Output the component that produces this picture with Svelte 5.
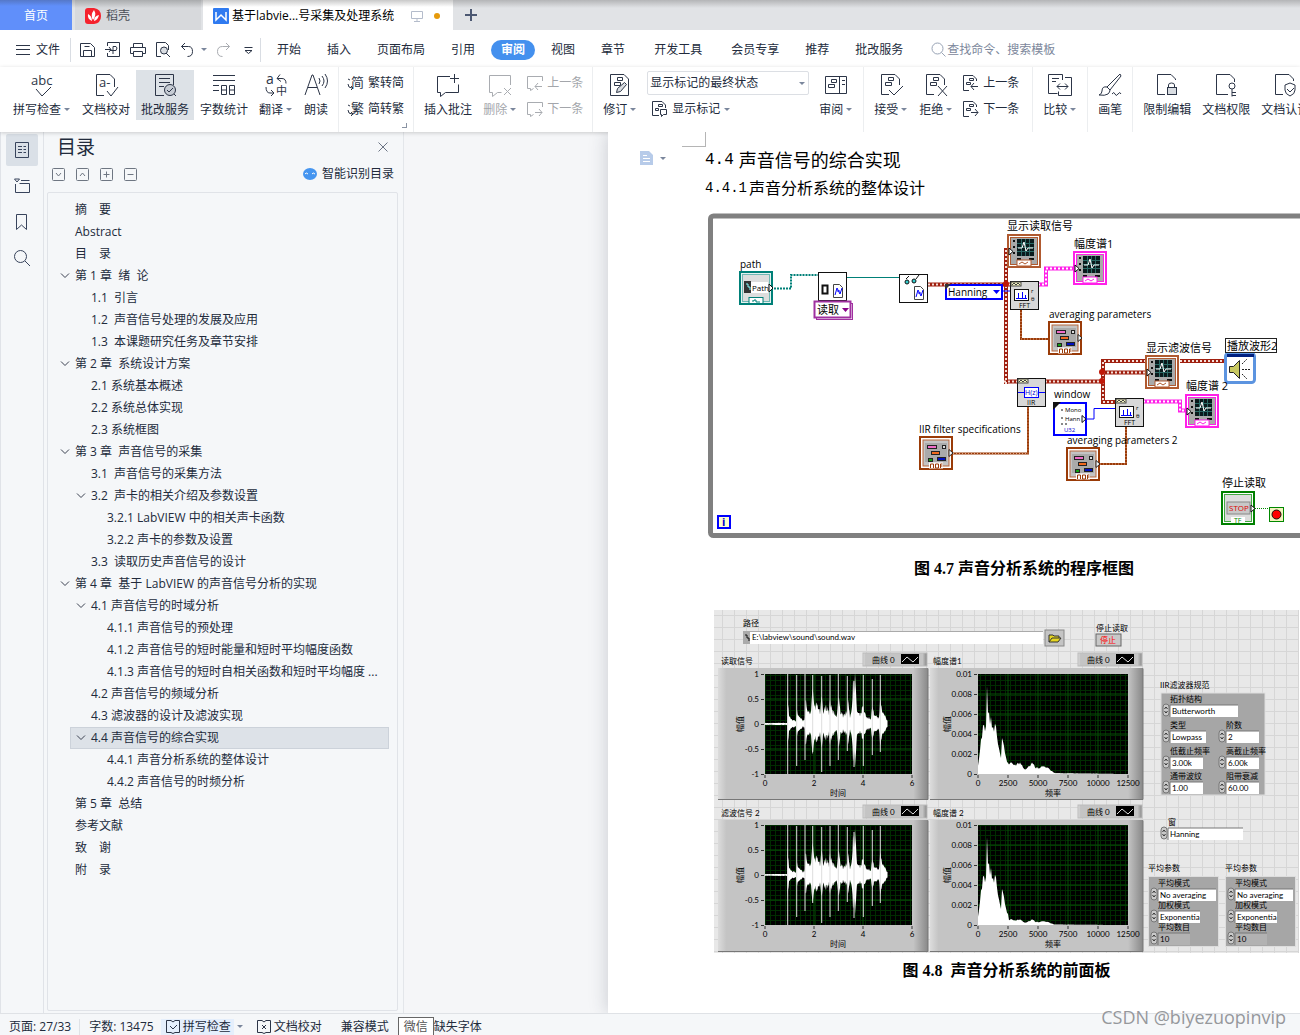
<script>
  const menus = ['开始', '插入', '页面布局', '引用', '审阅', '视图', '章节', '开发工具', '会员专享', '推荐', '批改服务'];

  const outline = [
    { level: 0, text: '摘　要' },
    { level: 0, text: 'Abstract' },
    { level: 0, text: '目　录' },
    { level: 0, text: '第 1 章  绪  论', open: true },
    { level: 1, text: '1.1  引言' },
    { level: 1, text: '1.2  声音信号处理的发展及应用' },
    { level: 1, text: '1.3  本课题研究任务及章节安排' },
    { level: 0, text: '第 2 章  系统设计方案', open: true },
    { level: 1, text: '2.1 系统基本概述' },
    { level: 1, text: '2.2 系统总体实现' },
    { level: 1, text: '2.3 系统框图' },
    { level: 0, text: '第 3 章  声音信号的采集', open: true },
    { level: 1, text: '3.1  声音信号的采集方法' },
    { level: 1, text: '3.2  声卡的相关介绍及参数设置', open: true },
    { level: 2, text: '3.2.1 LabVIEW 中的相关声卡函数' },
    { level: 2, text: '3.2.2 声卡的参数及设置' },
    { level: 1, text: '3.3  读取历史声音信号的设计' },
    { level: 0, text: '第 4 章  基于 LabVIEW 的声音信号分析的实现', open: true },
    { level: 1, text: '4.1 声音信号的时域分析', open: true },
    { level: 2, text: '4.1.1 声音信号的预处理' },
    { level: 2, text: '4.1.2 声音信号的短时能量和短时平均幅度函数' },
    { level: 2, text: '4.1.3 声音信号的短时自相关函数和短时平均幅度 ...' },
    { level: 1, text: '4.2 声音信号的频域分析' },
    { level: 1, text: '4.3 滤波器的设计及滤波实现' },
    { level: 1, text: '4.4 声音信号的综合实现', open: true },
    { level: 2, text: '4.4.1 声音分析系统的整体设计' },
    { level: 2, text: '4.4.2 声音信号的时频分析' },
    { level: 0, text: '第 5 章  总结' },
    { level: 0, text: '参考文献' },
    { level: 0, text: '致　谢' },
    { level: 0, text: '附　录' }
  ];

  let activeMenu = $state('审阅');
  let selected = $state(24);
  let markup = $state('显示标记的最终状态');

  const page = 'M10 21.5H2.5V1.5H16l4.5 4.5v6';
  const marks = 'M9.5 4.5h5v3h-5zM6.5 9.5h6v3h-6z';
  const bubble = 'M22.5 12V2.5H1.5v17h3v4l5-4h4';
  const icons = {
    spell: 'M6 16l6 7 9-9',
    proof: 'M10 22.5H2.5V1.5H16l4.5 4.5v8M13 18l4 5 7-9',
    count: 'M1 2.5h22M1 7.5h22M1 12.5h6M1 17.5h6M9.5 12.5h5v9h-5zM17.5 12.5h5v9h-5zM9.5 17h5M17.5 17h5',
    translate: 'M13 5.5l3-4M13 5.5l4 3M13 5.5h5q4 0 4 5M2 14q0 6 4 6h3M7 17l3 3-3 3',
    read: 'M1 22L8 2h1l7 20M4 14.5h9M15 5q2 3 0 6M18 3q4 5 0 10M21 1q5 7 0 14',
    comment: 'M14 3.5H1.5v16h3v4l5-4h13v-8M18.5 1v9M14 5.5h9',
    remove: bubble + 'M16 15l7 7m0-7l-7 7',
    panes: 'M1.5 3.5h21v17h-21zM15.5 3.5v17M18 7.5h3M18 11.5h3M7.5 6.5h5v3h-5zM4.5 11.5h6v3h-6z',
    accept: page + marks + 'M10 17l5 5 9-9',
    reject: page + marks + 'M14 13l9 10m0-10l-9 10',
    compare: 'M14.5 7V1.5H.5v19h9M4 5.5h7M4 8.5h4M17 4.5h6.5v18h-13v-4M9 13.5h11M12 10.5l-3 3 3 3M17 10.5l3 3-3 3'
  };
  const minis = {
    prevComment: 'M15.5 6V1.5H.5v12h3v2l3-2M15 11.5H8M11 8l-3 3.5 3 3.5',
    nextComment: 'M15.5 6V1.5H.5v12h3v2l3-2M8 11.5h7M12 8l3 3.5-3 3.5',
    prev: 'M6 15.5H.5V.5H10l3.5 3.5v2M6.5 3.5h4v2h-4zM3.5 7.5h4v2h-4zM15 11.5H8M11 8l-3 3.5 3 3.5',
    next: 'M6 15.5H.5V.5H10l3.5 3.5v2M6.5 3.5h4v2h-4zM3.5 7.5h4v2h-4zM8 11.5h7M12 8l3 3.5-3 3.5',
    show: 'M7 14.5H.5V.5H10l3.5 3.5v3M6.5 3.5h4v2h-4zM3.5 7.5h3v2h-3zM8.5 8.5h6v5h-3l-2 2v-2h-1z'
  };

  const noise = (i) => Math.abs(Math.sin(i * 12.9898) * 43758.5453) % 1;
  const spikes = [22.7, 31.7, 40, 47.7, 56.7, 65, 73.3, 82.3, 89, 98.3, 107.3, 115.3];
  const heights = [50, 49, 50, 49, 48, 49, 50, 48, 43, 49, 45, 49];

  const envelope = [[0, 1], [22, 1], [22.5, 28], [24, 10], [27, 4], [31, 3], [32, 18], [33, 8], [38, 3], [40, 6], [40.5, 24], [42, 12], [46, 12], [47.5, 32], [49, 17], [52, 18], [55, 11], [57, 26], [58, 12], [62, 17], [64, 11], [65, 24], [67, 13], [72, 8], [73.5, 34], [75, 14], [78, 8], [82, 12], [83, 22], [85, 8], [87, 18], [88, 38], [90.5, 42], [91.5, 18], [95, 8], [98, 18], [99, 14], [101, 7], [106, 5], [107.5, 20], [109, 9], [114, 6], [115.5, 26], [117, 12], [120, 8], [123, 2], [150, 0]];
  const profile = [[0, 10], [2, 30], [4, 52], [6, 62], [8, 68], [9, 98], [11, 88], [12, 64], [15, 56], [18, 58], [19, 44], [21, 28], [23, 20], [24, 38], [26, 34], [27, 22], [30, 14], [34, 12], [43, 13], [47, 6], [54, 13], [58, 8], [66, 9], [71, 6], [77, 1], [151, 0]];

  function level(points, x) {
    const k = points.findIndex((p) => p[0] > x);
    const [xa, ya] = points[k - 1];
    const [xb, yb] = points[k];
    return ya + ((yb - ya) * (x - xa)) / (xb - xa);
  }

  // the recording is drawn mirrored around the zero line
  function wave(x0, y0, scale) {
    let up = '';
    let down = '';
    for (let i = 0; i <= 245; i++) {
      const x = i / 2;
      const a = level(envelope, x) * (0.75 + noise(i) * 0.5) * scale;
      up += `L${x0 + x} ${(y0 - a).toFixed(1)}`;
      down = `L${x0 + x} ${(y0 + a * 0.85).toFixed(1)}` + down;
    }
    return 'M' + up.slice(1) + down + 'Z';
  }

  function spectrum(x0, y0, tail) {
    let d = `M${x0} ${y0}`;
    for (let i = 0; i < 150; i++) {
      const h = level(profile, i) * (i > 30 ? tail : 1) * (0.65 + noise(i + 3) * 0.3);
      d += `L${x0 + i} ${(y0 - h).toFixed(1)}`;
    }
    return d + `V${y0}Z`;
  }

  const fields = [
    ['拓扑结构', 'Butterworth', 1169, 700, 68],
    ['类型', 'Lowpass', 1169, 726, 36],
    ['阶数', '2', 1225, 726, 33],
    ['低截止频率', '3.00k', 1169, 752, 33],
    ['高截止频率', '6.00k', 1225, 752, 33],
    ['通带波纹', '1.00', 1169, 777, 33],
    ['阻带衰减', '60.00', 1225, 777, 33]
  ];
</script>

{#snippet big(label, icon, caret = false, extra = '')}
  <button class="big {extra}" class:drop={caret}>
    <svg class="icon" viewBox="0 0 24 24" width="24" height="24">
      {#if icons[icon]}<path d={icons[icon]} />{/if}
      {#if icon === 'spell'}<text x="1" y="12" font-size="13">abc</text>{/if}
      {#if icon === 'proof'}<text x="5" y="14" font-size="13">a-</text>{/if}
      {#if icon === 'translate'}
        <text x="2" y="11" font-size="14">a</text><text x="12" y="22" font-size="11">中</text>
      {/if}
      {#if icon === 'review'}
        <path d="M11 22.5H2.5V1.5h18V12M6 5.5h11M6 9.5h11M6 13.5h5" />
        <circle cx="17" cy="17" r="5.5" fill="#c6ccd4" />
        <path d="M14 17l2 2 4-4M21 21l2 2" />
      {/if}
      {#if icon === 'revise'}
        <path d="M2.5 1.5H16l4.5 4.5v16.5h-18z" /><path d={marks} />
        <path d="M8.5 19.5l1-4 7-6 2 2-6 7z" fill="#d9dde2" />
      {/if}
      {#if icon === 'brush'}
        <path d="M22 1L9 14l3 3L23 3z" /><path d="M9 14q-5-1-5 4 0 3-3 4 6 1 9-1 2-2 2-4M14 21q2-3 3 0t3 0 3 0" />
      {/if}
      {#if icon === 'lock'}
        <path d="M10 21.5H2.5V1.5H16l4.5 4.5v1" /><path d="M13.5 15v-3q0-2 3-2t3 2v3" />
        <rect x="12.5" y="14.5" width="9" height="7" fill="#d9dde2" />
      {/if}
      {#if icon === 'key'}
        <path d="M14 21.5H2.5V1.5H16l4.5 4.5v3" /><circle cx="18" cy="13" r="3" /><path d="M18 16v7.5M18 19.5h4M18 22.5h4" />
      {/if}
      {#if icon === 'shield'}
        <path d="M10 21.5H2.5V1.5H16l4.5 4.5v2" /><path d="M17 10l5 2v5q0 4-5 6-5-2-5-6v-5zM14 16l3 3 4-4" />
      {/if}
    </svg>
    <span>{label}{#if caret}<i class="caret"></i>{/if}</span>
  </button>
{/snippet}

{#snippet mini(label, icon, extra = '', caret = false)}
  <button class="mini {extra}">
    <svg class="icon" viewBox="0 0 16 16" width="16" height="16">
      {#if minis[icon]}
        <path d={minis[icon]} />
      {:else}
        <path d="M0 9q0 4 4 4M3 11l2 2-2 2M0 4l2 1" />
        <text x="3" y="12" font-size="13">{icon}</text>
      {/if}
    </svg>
    {label}{#if caret}<i class="caret"></i>{/if}
  </button>
{/snippet}

{#snippet graphNode(x, y, color)}
  <g transform="translate({x} {y})">
    <rect x="1" y="1" width="32" height="32" fill="#fff" stroke={color} stroke-width="2" />
    <rect x="3.5" y="3.5" width="27" height="27" fill="#aaa" stroke={color} />
    <rect x="10" y="5" width="17" height="17" fill="#0a1a1c" />
    <path d="M10 9.5h17M10 13.5h17M10 17.5h17M14.5 5v17M18.5 5v17M22.5 5v17" stroke="#2c6a66" />
    <path d="M11 14h4l2-6 2 9 2-3h5" stroke="#fff" fill="none" />
    <path d="M6 7h2M6 13h2M6 19h2M10 25h4M22 25h5" stroke="#111" stroke-width="2" />
    <rect x="10" y="26" width="14" height="6" fill="#fff" stroke={color} />
    <path d="M12 30l3-2 3 2 3-2" stroke={color} fill="none" />
    <path d="M2 14v7l4-3.5z" fill="#fff" stroke="#111" />
  </g>
{/snippet}

{#snippet clusterNode(x, y)}
  <g transform="translate({x} {y})">
    <rect x="1" y="1" width="32" height="32" fill="#fff" stroke="#9a3b08" stroke-width="2" />
    <rect x="4" y="4" width="26" height="26" fill="#c4c4c4" stroke="#b8663c" />
    <rect x="6" y="7" width="22" height="19" fill="#aaa" />
    <g stroke="#222">
      <rect x="8.5" y="9.5" width="9" height="3" fill="#f06cc8" />
      <rect x="23.5" y="9.5" width="3" height="3" fill="#ddd" />
      <rect x="12.5" y="15.5" width="8" height="3" fill="#f06a20" />
      <rect x="9.5" y="22.5" width="4" height="3" fill="#10a010" />
      <rect x="18.5" y="21.5" width="8" height="3" fill="#0010c0" />
      <path d="M30 13.5v7l4-3.5z" fill="#fff" />
    </g>
    <rect x="10" y="26.5" width="14" height="6" fill="#fff" />
    <path d="M11.5 32v-4h3v4M16.5 32v-4h3v4h-3M21.5 32v-4h2M21.5 30h2" stroke="#9a3b08" fill="none" />
  </g>
{/snippet}

{#snippet fftNode(x, y, label)}
  <g transform="translate({x} {y})">
    <rect x=".5" y=".5" width="28" height="28" fill="#d8d8d8" stroke="#111" />
    <rect x="1" y="1" width="10" height="4" fill="#f2f2c0" stroke="#444" />
    <path d="M2 4l2-2 2 2 2-2 2 2" stroke="#444" fill="none" />
    {#if label === 'FFT'}
      <rect x="4.5" y="8.5" width="14" height="11" fill="#fff" stroke="#111" />
      <path d="M6 17.5h11M8.5 17v-5M12.5 17v-6M15.5 17v-3" stroke="#00f" />
      <text x="21" y="12" font-size="6">r</text><text x="21" y="20" font-size="6">θ</text>
    {:else}
      <path d="M1 14.5h27" stroke="#00f" />
      <rect x="7.5" y="9.5" width="14" height="10" fill="#fff" stroke="#00f" />
      <text x="8" y="17" font-size="7" fill="#00c">H(z)</text>
    {/if}
    <text x={label === 'FFT' ? 9 : 10} y="27" font-size="7">{label}</text>
  </g>
{/snippet}

{#snippet spinner(x, y)}
  <rect {x} {y} width="6" height="12" rx="3" fill="#c9c9c9" stroke="#777" />
  <path d="M{x + 1.5} {y + 5}l1.5-2 1.5 2M{x + 1.5} {y + 7}l1.5 2 1.5-2" stroke="#333" fill="none" />
{/snippet}

{#snippet field(label, value, x, y, w, off = false)}
  {@render spinner(x - 6, y + 4)}
  <text x={x + 1} y={y + 2}>{label}</text>
  <rect x={x + 1} y={y + 5} width={w} height="12" fill={off ? '#b2b2b2' : '#fff'} />
  <path d="M{x + 1} {y + 17}v-12h{w}" stroke="#777" fill="none" />
  <text x={x + 3} y={y + 14}>{value}</text>
{/snippet}

{#snippet plot(x, y, w, title, kind, top)}
  <rect {x} {y} width={w} height="132" fill="url(#metal)" />
  <path d="M{x} {y + 131.5}h{w}v-131" stroke="#777" fill="none" />
  <text x={x + 3} y={y - 4}>{title}</text>
  <rect x={x + w - 65} y={y - 15} width="64" height="13" fill="url(#metal)" stroke="#bbb" />
  <text x={x + w - 56} y={y - 5}>曲线 0</text>
  <rect x={x + w - 27} y={y - 14} width="18" height="10" fill="#000" />
  <path d="M{x + w - 26} {y - 6}l5-5 6 5 5-5" stroke="#ddd" fill="none" />
  {#if kind === 'time'}
    <rect x={x + 47} y={top} width="147" height="100" fill="#000" />
    <rect x={x + 47} y={top} width="147" height="100" fill="url(#grid)" />
    <path d="M{x + 47} {top + 25}h147M{x + 47} {top + 75}h147M{x + 96} {top}v100M{x + 145} {top}v100" stroke="#064f06" />
    <path d={wave(x + 47, top + 50, top > 800 ? 0.9 : 1)} fill="#fff" />
    {#each spikes as s, i}
      <path d="M{x + 47 + s} {top + 50 - heights[i]}v{heights[i] * 2 - (i % 4) * 7}" stroke="#ddd" />
    {/each}
    {#each ['1', '0.5', '0', '-0.5', '-1'] as t, i}
      <text x={x + 41} y={top + 3 + i * 25} text-anchor="end">{t}</text>
      <path d="M{x + 43} {top + 0.5 + i * 25}h3" stroke="#333" />
    {/each}
    {#each ['0', '2', '4', '6'] as t, i}
      <text x={x + 47 + i * 49} y={top + 112} text-anchor="middle">{t}</text>
      <path d="M{x + 47 + i * 49} {top + 101}v3" stroke="#333" />
    {/each}
    <text x={x + 112} y={top + 122}>时间</text>
    <text transform="translate({x + 25} {top + 58}) rotate(-90)">幅值</text>
  {:else}
    <rect x={x + 48} y={top} width="150" height="100" fill="#000" />
    <rect x={x + 48} y={top} width="150" height="100" fill="url(#grid)" />
    <path d="M{x + 48} {top + 20}h150m-150 20h150m-150 20h150m-150 20h150M{x + 78} {top}v100m30-100v100m30-100v100m30-100v100" stroke="#064f06" fill="none" />
    <path d={spectrum(x + 48, top + 100, top > 800 ? 0.5 : 1)} fill="#fff" />
    {#each ['0.01', '0.008', '0.006', '0.004', '0.002', '0'] as t, i}
      <text x={x + 42} y={top + 3 + i * 20} text-anchor="end">{t}</text>
      <path d="M{x + 44} {top + 0.5 + i * 20}h3" stroke="#333" />
    {/each}
    {#each ['0', '2500', '5000', '7500', '10000', '12500'] as t, i}
      <text x={x + 48 + i * 30} y={top + 112} text-anchor="middle">{t}</text>
      <path d="M{x + 48 + i * 30} {top + 101}v3" stroke="#333" />
    {/each}
    <text x={x + 115} y={top + 122}>频率</text>
    <text transform="translate({x + 20} {top + 58}) rotate(-90)">幅值</text>
  {/if}
{/snippet}

<div class="app">
  <header>
    <nav class="tabs">
      <button class="tab home">首页</button>
      <button class="tab docer">
        <svg viewBox="0 0 16 16" width="16" height="16">
          <path d="M0 3Q0 0 3 0h6q7 1 7 8t-7 8H3q-3 0-3-3z" fill="#f5222d" />
          <path d="M8 12Q5 7 9 2q3 5-1 10zM7 13Q2 11 3 6q4 2 4 7zM9 13q0-5 5-6-1 5-5 6z" fill="#fff" />
        </svg>
        稻壳
      </button>
      <button class="tab doc">
        <svg viewBox="0 0 16 16" width="16" height="16">
          <rect width="16" height="16" rx="1" fill="#2f7af0" />
          <path d="M3 4v8l5-5 5 5V4" stroke="#fff" stroke-width="1.5" fill="none" />
        </svg>
        <span>基于labvie...号采集及处理系统</span>
        <svg viewBox="0 0 12 12" width="12" height="12"><path d="M.5 1.5h11v7H.5zM6 9v2M3 11.5h6" stroke="#b4bccb" fill="none" /></svg>
        <i class="dot"></i>
      </button>
      <button class="add" aria-label="新建">
        <svg viewBox="0 0 12 12" width="12" height="12"><path d="M6 0v12M0 6h12" stroke="#4c5872" stroke-width="2" /></svg>
      </button>
    </nav>

    <div class="menubar">
      <button class="file">
        <svg class="icon" viewBox="0 0 14 12" width="14" height="12"><path d="M0 1.5h14M0 5.5h14M0 10.5h14" /></svg>
        文件
      </button>
      <div class="quick">
        <button aria-label="保存"><svg class="icon" viewBox="0 0 16 16" width="16" height="16"><path d="M.5 14.5V1.5h10l4 4v9zM3.5 14V8.5h8V14M4.5 4.5h5" /></svg></button>
        <button aria-label="输出为PDF"><svg class="icon" viewBox="0 0 16 16" width="16" height="16"><path d="M2.5 4V.5h12v14h-12V11M0 7.5h6M4 5l2 2.5L4 10M8 12V4.5h3q2 1 0 4H5" /></svg></button>
        <button aria-label="打印"><svg class="icon" viewBox="0 0 16 16" width="16" height="16"><path d="M3.5 5V1.5h9V5M3.5 11.5h-3v-6h15v6h-3M3.5 9.5h9v5h-9z" /></svg></button>
        <button aria-label="打印预览"><svg class="icon" viewBox="0 0 16 16" width="16" height="16"><path d="M6 14.5H1.5V.5h9l3 3V8" /><circle cx="9" cy="8.5" r="3.5" fill="#d9dde2" /><path d="M11 11l4 4" /></svg></button>
        <button class="undo" aria-label="撤销"><svg class="icon" viewBox="0 0 16 16" width="16" height="16"><path d="M5 1L1.5 4.5 5 8M1.5 4.5h7q4 0 4 5t-5 5" /></svg><i class="caret"></i></button>
        <button class="off" aria-label="恢复"><svg class="icon" viewBox="0 0 16 16" width="16" height="16"><path d="M10 1l3.5 3.5L10 8M13.5 4.5h-7q-5 0-5 5t5 5" /></svg></button>
        <button aria-label="自定义"><svg class="icon" viewBox="0 0 16 16" width="16" height="16"><path d="M3.5 5.5h8M4 8.5l3.5 3 3.5-3z" /></svg></button>
      </div>
      {#each menus as menu}
        <button
          class="menu"
          class:wide={menu === '开发工具'}
          class:active={menu === activeMenu}
          onclick={() => (activeMenu = menu)}
        >{menu}</button>
      {/each}
      <label class="search">
        <svg viewBox="0 0 15 15" width="15" height="15"><circle cx="6.5" cy="6.5" r="5.5" /><path d="M10.5 10.5l4 4" /></svg>
        <input type="text" placeholder="查找命令、搜索模板" aria-label="查找命令" />
      </label>
    </div>

    <div class="ribbon">
      <div class="group first">
        {@render big('拼写检查', 'spell', true)}
        {@render big('文档校对', 'proof')}
        {@render big('批改服务', 'review', false, 'on')}
        {@render big('字数统计', 'count')}
        {@render big('翻译', 'translate', true)}
        {@render big('朗读', 'read')}
      </div>
      <div class="group">
        <div class="stack">
          {@render mini('繁转简', '简')}
          {@render mini('简转繁', '繁')}
        </div>
        <i class="launcher"></i>
      </div>
      <div class="group">
        {@render big('插入批注', 'comment')}
        {@render big('删除', 'remove', true, 'off')}
        <div class="stack">
          {@render mini('上一条', 'prevComment', 'off')}
          {@render mini('下一条', 'nextComment', 'off')}
        </div>
      </div>
      <div class="group">
        {@render big('修订', 'revise', true)}
        <div class="stack">
          <div class="combo">
            <select bind:value={markup} aria-label="显示标记状态">
              <option>显示标记的最终状态</option>
              <option>原始状态</option>
            </select>
            <i class="caret"></i>
          </div>
          {@render mini('显示标记', 'show', 'indent', true)}
        </div>
        {@render big('审阅', 'panes', true)}
      </div>
      <div class="group">
        {@render big('接受', 'accept', true)}
        {@render big('拒绝', 'reject', true)}
        <div class="stack roomy">
          {@render mini('上一条', 'prev')}
          {@render mini('下一条', 'next')}
        </div>
      </div>
      <div class="group">{@render big('比较', 'compare', true)}</div>
      <div class="group">{@render big('画笔', 'brush')}</div>
      <div class="group">
        {@render big('限制编辑', 'lock')}
        {@render big('文档权限', 'key')}
        {@render big('文档认证', 'shield')}
      </div>
    </div>
  </header>

  <div class="workspace">
    <nav class="rail">
      <button class="on" aria-label="目录"><svg class="icon" viewBox="0 0 16 16" width="16" height="16"><path d="M1.5.5h13v15h-13zM4 4.5h4M4 7.5h4M4 10.5h4M9.5 4.5H12M9.5 7.5H12M9.5 10.5H12" /></svg></button>
      <button aria-label="章节"><svg class="icon" viewBox="0 0 16 16" width="16" height="16"><path d="M.5 1h5L3 4zM7 2.5h8.5M1.5 6v8.5h14v-9h-10" /></svg></button>
      <button aria-label="书签"><svg class="icon" viewBox="0 0 16 16" width="16" height="16"><path d="M2.5.5h10v15l-5-4.5-5 4.5z" /></svg></button>
      <button aria-label="查找"><svg class="icon" viewBox="0 0 16 16" width="16" height="16"><circle cx="6.5" cy="6.5" r="6" /><path d="M11 11l5 5" /></svg></button>
    </nav>

    <aside class="panel">
      <div class="panel-head">
        <h2>目录</h2>
        <button aria-label="关闭"><svg viewBox="0 0 10 10" width="10" height="10"><path d="M.5.5l9 9m0-9l-9 9" stroke="#6b7484" fill="none" /></svg></button>
      </div>
      <div class="panel-tools">
        {#each [['展开', 'M4 5l2.5 3L9 5'], ['收起', 'M4 8l2.5-3L9 8'], ['加', 'M3.5 6.5h6M6.5 3.5v6'], ['减', 'M3.5 6.5h6']] as [name, d]}
          <button aria-label={name}><svg viewBox="0 0 13 13" width="13" height="13"><rect x=".5" y=".5" width="12" height="12" rx="1" /><path {d} /></svg></button>
        {/each}
        <button class="smart">
          <svg viewBox="0 0 14 12" width="14" height="12"><ellipse cx="7" cy="6" rx="7" ry="6" fill="#4595f0" stroke="none" /><path d="M2 6q1-2 3 0M9 6q1-2 3 0" stroke="#fff" /></svg>
          智能识别目录
        </button>
      </div>
      <ul class="tree">
        {#each outline as item, i}
          <li class="level{item.level}" class:selected={i === selected}>
            {#if item.open}
              <button class="toggle" aria-label="折叠"><svg viewBox="0 0 10 6" width="10" height="6"><path d="M1 .5l4 4 4-4" stroke="#3a4150" fill="none" /></svg></button>
            {/if}
            <button class="entry" onclick={() => (selected = i)}>{item.text}</button>
          </li>
        {/each}
      </ul>
    </aside>

    <main>
      <article>
        <div class="para-mark">
          <svg viewBox="0 0 13 14" width="13" height="14"><path d="M0 0h9l4 4v10H0z" fill="#b7cbe9" /><path d="M3 4.5h4M3 7.5h7M3 10.5h7" stroke="#fff" /></svg>
          <i class="caret"></i>
        </div>
        <i class="corner"></i>
        <h1><span>4.4</span>声音信号的综合实现</h1>
        <h3><span>4.4.1</span>声音分析系统的整体设计</h3>

        <figure>
          <svg class="diagram" viewBox="708 213 632 326" width="632" height="326">
            <rect x="710.5" y="216" width="640" height="319.5" rx="3" fill="#fff" stroke="#808080" stroke-width="5" />
            <g fill="none">
              <path d="M774 288.5h17V275h27" stroke="#008078" stroke-width="2" stroke-dasharray="2 1" />
              <path d="M847 277.5h52" stroke="#008078" />
              <g stroke="#a02010" stroke-width="4">
                <path d="M928 284.5h82M1006 384V250h4M1004 381.5h13M1045 381.5h57M1146 361h-43v41h14M1103 372.5h43M1180 361h45" />
              </g>
              <path d="M928 284.5h82M1006 384V250h4M1004 381.5h13M1045 381.5h57M1146 361h-43v41h14M1103 372.5h43M1180 361h45" stroke="#f4e0da" stroke-width="2" stroke-dasharray="2 2" />
              <g stroke="#ff20e8" stroke-width="4">
                <path d="M1038 284.5h8v-16h28M1143 401.5h37v9h6" />
              </g>
              <path d="M1038 284.5h8v-16h28M1143 401.5h37v9h6" stroke="#fff" stroke-width="2" stroke-dasharray="2 2" />
              <path d="M1021 309v30h28M953 453.5h75V406M1126 426v38h-26" stroke="#9a3b08" stroke-width="2" />
              <path d="M1021 309v30h28M953 453.5h75V406M1126 426v38h-26" stroke="#e0a080" stroke-dasharray="1 2" />
              <path d="M1087 419h7v-10.5h21M1000 291h10" stroke="#00f" />
              <path d="M1255 508.5h14" stroke="#080" stroke-dasharray="1 1" />
            </g>
            <g fill="#c01808"><circle cx="1006" cy="284" r="3" /><circle cx="1102" cy="372" r="3" /><circle cx="1102" cy="381" r="3" /></g>

            <g transform="translate(739 271)">
              <rect x="1" y="1" width="32" height="32" fill="#e6f2f1" stroke="#008078" stroke-width="2" />
              <rect x="3.5" y="3.5" width="27" height="27" fill="#ddd" stroke="#70b8b4" />
              <rect x="5" y="10" width="7" height="12" fill="#333" /><path d="M7 13h2v3h2v3" stroke="#8ff" fill="none" />
              <rect x="12" y="11" width="17" height="11" fill="#fff" />
              <text x="13" y="20" font-size="8">Path</text>
              <path d="M30 13v8l4-4z" fill="#fff" stroke="#111" />
              <rect x="10" y="26.5" width="14" height="6" fill="#fff" stroke="#008078" /><path d="M13 30h2v-1h2v2h4" stroke="#008078" fill="none" />
            </g>
            {#each [[818, 272], [899, 274]] as [x, y]}
              <rect x={x + 0.5} y={y + 0.5} width="28" height="28" fill="#fff" stroke="#111" />
              <path d="M{x + 15.5} {y + 12.5}h6l3 3v10h-9z" fill="#fff" stroke="#444" />
              <path d="M{x + 17} {y + 23}l2-7 3 6 2-6M{x + 19} {y + 19}h3" stroke="#00f" fill="none" />
            {/each}
            <rect x="822.5" y="285.5" width="5" height="8" fill="none" stroke="#111" stroke-width="2" />
            <g fill="#3cc" stroke="#111"><circle cx="907" cy="282" r="2" /><circle cx="914" cy="281" r="2" /><path d="M906 279l3-3M916 279l3-4" /></g>
            <rect x="816.5" y="303.5" width="36" height="16" fill="#fff" stroke="#a030a0" />
            <rect x="814.5" y="301.5" width="36" height="16" fill="#fff" stroke="#a030a0" stroke-width="2" />
            <text x="817" y="314">读取</text><path d="M842 308h7l-3.5 4z" fill="#808" />
            <rect x="946" y="285" width="56" height="14" fill="#fff" stroke="#00f" stroke-width="2" />
            <path d="M945 284h6l-6 6z" fill="#333" /><text class="latin" x="948" y="296">Hanning</text><path d="M993 290h7l-3.5 4z" fill="#00f" />

            {@render graphNode(1007, 234, '#b05a30')}
            {@render graphNode(1073, 251, '#ff20e8')}
            {@render graphNode(1145, 355, '#b05a30')}
            {@render graphNode(1185, 394, '#ff20e8')}
            {@render clusterNode(1048, 321)}
            {@render clusterNode(919, 436)}
            {@render clusterNode(1066, 447)}
            {@render fftNode(1010, 281, 'FFT')}
            {@render fftNode(1017, 378, 'IIR')}
            {@render fftNode(1115, 398, 'FFT')}

            <rect x="1054" y="403" width="32" height="32" fill="#fff" stroke="#00f" stroke-width="2" />
            <path d="M1053 402h8l-8 8z" fill="#111" />
            <g font-size="6"><text x="1065" y="412">Mono</text><text x="1065" y="421">Hann</text></g>
            <path d="M1061 410h2M1061 418h2M1061 424h2M1065 424h2" stroke="#111" />
            <path d="M1082 415.5v7l4-3.5z" fill="#fff" stroke="#111" />
            <text x="1064" y="432" font-size="6" fill="#00c">U32</text>

            <rect x="1225.5" y="353.5" width="29" height="29" rx="3" fill="#fff" stroke="#5c94e0" stroke-width="3" />
            <path d="M1227 355.5h27" stroke="#002080" stroke-width="3" />
            <path d="M1229.5 366.5h4l6-6v18l-6-6h-4z" fill="#c8c860" stroke="#222" />
            <path d="M1242 364l5-5M1242 369.5h9M1242 374l5 5" stroke="#222" stroke-dasharray="2 1" />
            <rect x="1225.5" y="338.5" width="51" height="14" fill="#fff" stroke="#222" />

            <rect x="1222" y="492" width="32" height="32" fill="#fff" stroke="#008000" stroke-width="2" />
            <rect x="1224.5" y="494.5" width="27" height="27" fill="#ddd" stroke="#4a4" />
            <rect x="1227" y="502" width="23" height="12" fill="#c8c8c8" stroke="#888" />
            <text x="1229" y="511" font-size="8" fill="#d00">STOP</text>
            <path d="M1251 505v7l4-3.5z" fill="#fff" stroke="#111" />
            <rect x="1231" y="517" width="14" height="6" fill="#fff" /><text x="1234" y="523" font-size="7" fill="#080">TF</text>
            <rect x="1269.5" y="507.5" width="14" height="14" fill="#f4f4c0" stroke="#080" />
            <circle cx="1276.5" cy="514.5" r="4.5" fill="#f00" stroke="#111" />
            <rect x="718" y="516" width="12" height="12" fill="#ffc" stroke="#00f" stroke-width="2" />
            <text x="722" y="526" font-weight="bold" fill="#00c">i</text>

            <text class="latin" x="740" y="268">path</text>
            <text x="1007" y="230">显示读取信号</text>
            <text x="1074" y="248">幅度谱1</text>
            <text class="latin" x="1049" y="318">averaging parameters</text>
            <text x="1146" y="352">显示滤波信号</text>
            <text x="1227" y="350">播放波形2</text>
            <text x="1186" y="390">幅度谱 2</text>
            <text class="latin" x="1054" y="398">window</text>
            <text class="latin" x="919" y="433">IIR filter specifications</text>
            <text class="latin" x="1067" y="444">averaging parameters 2</text>
            <text x="1222" y="487">停止读取</text>
          </svg>
          <figcaption>图 4.7 声音分析系统的程序框图</figcaption>
        </figure>

        <figure class="inset">
          <svg class="front" viewBox="714 610 585 343" width="585" height="343">
            <defs>
              <pattern id="paper" x="714" y="610" width="12" height="12" patternUnits="userSpaceOnUse">
                <rect width="12" height="12" fill="#e8e8e8" /><path d="M0 5.5h12M8.5 0v12" stroke="#d6d6d6" />
              </pattern>
              <pattern id="grid" width="5" height="5" patternUnits="userSpaceOnUse">
                <path d="M0 .5h5M.5 0v5" stroke="#012c01" fill="none" />
              </pattern>
              <linearGradient id="metal">
                <stop offset="0" stop-color="#dcdcdc" /><stop offset=".04" stop-color="#c4c4c4" />
                <stop offset=".93" stop-color="#c4c4c4" /><stop offset="1" stop-color="#888" />
              </linearGradient>
            </defs>
            <rect x="714" y="610" width="585" height="343" fill="url(#paper)" />
            <text x="743" y="626">路径</text>
            <rect x="743" y="632" width="7" height="12" fill="#aaa" /><path d="M745 635h2v3h2v3" stroke="#111" fill="none" />
            <rect x="750" y="632" width="293" height="12" fill="#fff" /><path d="M743 631.5h300" stroke="#aaa" />
            <text x="752" y="640">E:\labview\sound\sound.wav</text>
            <rect x="1045" y="630" width="19" height="16" fill="#c4c4c4" stroke="#888" />
            <path d="M1049 642v-7h4l1 1h5v2M1049 642l3-4h9l-3 4z" fill="#e6d620" stroke="#333" />
            <text x="1096" y="631">停止读取</text>
            <rect x="1096" y="634" width="25" height="12" fill="#c8c8c8" stroke="#666" />
            <text x="1100" y="643" fill="#f00">停止</text>

            {@render plot(718, 668, 210, '读取信号', 'time', 674)}
            {@render plot(930, 668, 213, '幅度谱1', 'freq', 674)}
            {@render plot(718, 820, 210, '滤波信号 2', 'time', 825)}
            {@render plot(930, 820, 213, '幅度谱 2', 'freq', 825)}

            <text x="1160" y="688">IIR滤波器规范</text>
            <rect x="1161" y="693" width="104" height="102" fill="#a6a6a6" stroke="#ddd" />
            {#each fields as [label, value, x, y, w]}
              {@render field(label, value, x, y, w)}
            {/each}
            {@render field('窗', 'Hanning', 1167, 823, 75)}
            {#each [1148, 1225] as x}
              <text {x} y="871">平均参数</text>
              <rect x={x + 0.5} y="876.5" width="70" height="70" fill="#a6a6a6" stroke="#ddd" />
              {@render field('平均模式', 'No averaging', x + 9, 884, 58)}
              {@render field('加权模式', 'Exponentia', x + 9, 906, 42)}
              {@render field('平均数目', '10', x + 9, 928, 32, true)}
            {/each}
          </svg>
          <figcaption>图 4.8&ensp;声音分析系统的前面板</figcaption>
        </figure>
      </article>
    </main>
  </div>

  <footer>
    <button class="pages">页面: 27/33</button>
    <button class="words">字数: 13475</button>
    <button class="check">
      <svg class="icon" viewBox="0 0 16 14" width="16" height="14"><path d="M6 .5H1.5v12H6l2 1 2-1h4.5V.5H10L8 2 6 .5M5 6l3 3 4-4" /></svg>
      拼写检查
    </button>
    <i class="caret"></i>
    <button class="proofing">
      <svg class="icon" viewBox="0 0 16 14" width="16" height="14"><path d="M6 .5H1.5v12H6l2 1 2-1h4.5V.5H10L8 2 6 .5M6 5l4 4m0-4l-4 4" /></svg>
      文档校对
    </button>
    <button class="compat">兼容模式</button>
    <button class="missing">缺失字体<span class="tip">微信</span></button>
    <span class="watermark">CSDN @biyezuopinvip</span>
  </footer>
</div>

<style>
  :global(body) { background: #f5f7f9; }

  .app {
    min-height: 100vh; display: flex; flex-direction: column; overflow: hidden;
    font: 12px/16px "Open Sans", "Noto Sans CJK SC", sans-serif; color: #222b3c;
  }

  button {
    border: none; background: none; padding: 0; margin: 0;
    font: inherit; color: inherit; white-space: nowrap; cursor: pointer;
  }
  svg { display: block; flex: none; }
  .icon { fill: none; stroke: #2c3547; overflow: visible; }
  .icon text { fill: #2c3547; stroke: none; }
  .caret {
    display: inline-block; flex: none; width: 0; height: 0; margin-left: 3px; vertical-align: 3px;
    border: 3px solid transparent; border-top: 3px solid #7a869c; border-bottom: none;
  }
  .off { color: #a3a6ab; }
  .off .icon { stroke: #a9acb1; }

  .tabs {
    display: flex; height: 30px; position: relative;
    background: linear-gradient(#b4b5b7, #e1e3e6 8px);
  }
  .tab { display: flex; align-items: center; height: 30px; gap: 5px; padding-top: 2px; }
  .home { width: 72px; justify-content: center; background: linear-gradient(#5578c8, #608ffa 6px); color: #fff; }
  .docer { width: 126px; margin-left: 3px; padding-left: 10px; background: linear-gradient(#a9abad, #d7d9dc 8px); color: #4b4f57; }
  .doc { padding-left: 10px; margin-left: 2px; width: 250px; gap: 3px; background: linear-gradient(#c9c9c9, #fff 7px); color: #000; }
  .doc span { margin-right: 14px; }
  .dot { width: 6px; height: 6px; border-radius: 50%; background: #e69a0b; margin-left: 8px; }
  .add { padding: 0 12px; }

  .menubar { display: flex; align-items: center; height: 37px; padding-top: 2px; box-sizing: border-box; background: #fff; }
  .file { display: flex; align-items: center; gap: 6px; padding: 4px 10px 4px 16px; border-right: 1px solid #d9dde3; }
  .quick { display: flex; align-items: center; gap: 9px; padding: 4px 4px 4px 9px; margin-right: 3px; border-right: 1px solid #d9dde3; width: 176px; }
  .undo { display: flex; align-items: center; gap: 2px; }
  .menu { padding: 0 10px; margin: 0 3px; height: 20px; border-radius: 10px; line-height: 20px; }
  .menu.wide { margin: 0 6px; }
  .menu.active { background: #4490ee; color: #fff; font-weight: bold; }
  .search { display: flex; align-items: center; gap: 1px; margin-left: 15px; }
  .search svg { fill: none; stroke: #98a3b5; }
  .search input { border: none; outline: none; padding: 0; width: 140px; background: none; font: inherit; color: #222b3c; }
  .search input::placeholder { color: #7c879b; opacity: 1; }

  .ribbon { display: flex; height: 65px; background: #fff; box-shadow: 0 1px 4px rgba(0, 0, 0, 0.18); position: relative; }
  .group { display: flex; flex: none; gap: 1px; padding: 0 5px; border-right: 1px solid #eceef0; align-items: flex-start; position: relative; }
  .group.first { padding-left: 8px; }
  .group:last-child { border-right: none; }
  .big {
    display: flex; flex-direction: column; align-items: center; gap: 5px;
    height: 50px; margin-top: 3px; padding: 3px 5px 0;
  }
  .big.drop { padding-right: 6px; }
  .big.on { background: #dde2e7; }
  .stack { display: flex; flex-direction: column; gap: 2px; padding-top: 4px; }
  .stack.roomy { padding-right: 4px; }
  .mini { display: flex; align-items: center; gap: 4px; height: 24px; padding: 0 4px; }
  .mini .caret { margin-left: 0; }
  .mini.indent { padding-left: 9px; }
  .launcher { position: absolute; right: 6px; bottom: 4px; width: 4px; height: 4px; border: solid #8a93a3; border-width: 0 1px 1px 0; }
  .combo { position: relative; margin: 0 4px; }
  .combo select {
    appearance: none; display: block; width: 162px; height: 24px; padding: 0 2px;
    border: 1px solid #dcdfe4; border-radius: 2px; background: #fff; font: inherit; color: inherit;
  }
  .combo .caret { position: absolute; right: 4px; top: 11px; }

  .workspace { flex: 1; display: flex; }
  .rail { width: 42px; border: solid #e0e3e8; border-width: 0 1px; padding-top: 2px; display: flex; flex-direction: column; align-items: center; gap: 4px; }
  .rail button { width: 32px; height: 32px; display: flex; align-items: center; justify-content: center; border-radius: 2px; }
  .rail .on { background: #dae0e7; }
  .rail .icon { stroke: #38445c; }

  .panel { width: 359px; flex: none; border-right: 1px solid #e3e6ea; display: flex; flex-direction: column; }
  .panel-head { display: flex; justify-content: space-between; align-items: center; padding: 3px 15px 0 13px; }
  h2 { margin: 0; font-size: 19px; line-height: 24px; font-weight: normal; }
  .panel-tools { display: flex; align-items: center; gap: 11px; margin: 7px 9px 0 8px; }
  .panel-tools svg { fill: none; stroke: #6e7682; }
  .smart { display: flex; align-items: center; gap: 5px; margin-left: auto; }
  .tree { flex: 1; list-style: none; margin: 10px 5px 2px 3px; padding: 6px 8px 20px 22px; border: 1px solid #e0e3e8; border-radius: 2px; }
  li { display: flex; align-items: center; height: 22px; padding-left: 5px; }
  li.selected { background: #dde2e8; box-shadow: 0 0 0 1px #ccd2da inset; }
  .level1 { padding-left: 21px; }
  .level2 { padding-left: 37px; }
  .toggle { width: 10px; margin: 0 5px 0 -15px; }
  .entry { white-space: pre; }

  main { flex: 1; min-width: 0; overflow: hidden; padding-left: 204px; background: #f5f6f8; }
  article {
    position: relative; width: 635px; min-height: 100%; box-sizing: content-box;
    padding: 0 97px; background: #fff; box-shadow: 0 0 18px rgba(40, 50, 70, 0.22);
  }
  .para-mark { position: absolute; left: 32px; top: 19px; display: flex; align-items: center; gap: 4px; }
  .corner { position: absolute; left: 74px; top: 0; width: 23px; height: 14px; border: solid #b5b5b5; border-width: 0 1px 1px 0; }
  h1, h3 { margin: 0; font-weight: normal; color: #000; display: flex; align-items: center; }
  h1 { padding-top: 14px; font-size: 18px; line-height: 28px; gap: 5px; }
  h3 { font-size: 16px; line-height: 28px; gap: 2px; margin-bottom: 11px; }
  h1 span, h3 span { font-family: "Liberation Mono", monospace; font-size: 16px; }
  h3 span { font-size: 14px; }
  figure { margin: 0 0 0 3px; width: 632px; }
  .inset { width: 585px; margin-left: 9px; }
  figcaption {
    text-align: center; color: #000; font: bold 16px/24px "Liberation Serif", "Noto Sans CJK SC", serif;
    padding: 18px 0 29px;
  }
  .inset figcaption { padding: 6px 0; }
  .diagram { font-size: 11px; }
  .diagram .latin { font-size: 10px; }
  .front { font-size: 8px; font-family: Lato, "Noto Sans CJK SC", sans-serif; }

  footer { position: relative; display: flex; align-items: center; height: 22px; padding: 4px 0 0 9px; box-sizing: border-box; border-top: 1px solid #dfe2e6; background: #f5f7f9; }
  footer button { display: flex; align-items: center; gap: 2px; }
  footer .pages { padding-right: 8px; border-right: 1px solid #dfe2e6; }
  .words { margin: 0 7px 0 9px; }
  .check { background: #e5effc; padding: 0 3px 0 4px; }
  .proofing { margin: 0 19px 0 13px; }
  .compat { margin-right: 45px; }
  .missing { position: relative; }
  .tip { position: absolute; right: 48px; top: -2px; padding: 1px 5px; border: 1px solid #666; background: #fff; color: #555; }
  .watermark { position: absolute; right: 14px; top: -9px; font-size: 18px; line-height: 24px; color: #96989c; }
</style>
